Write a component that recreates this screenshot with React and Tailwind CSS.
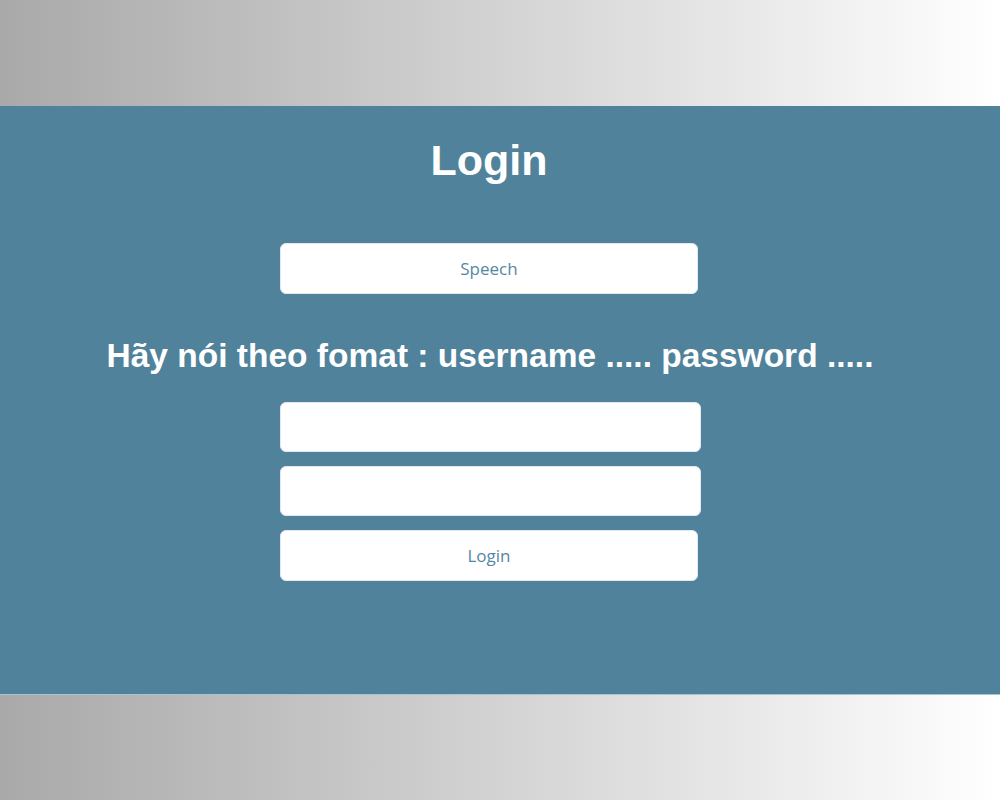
import React, { useState } from 'react';

const App = () => {
    const [username, setUsername] = useState('');
    const [password, setPassword] = useState('');

    const buttonStyle =
        "w-[418px] h-[51px] bg-white rounded-[6px] border border-[#dfe9ef] text-[#5587a4] " +
        "text-[17px] font-['Open_Sans',sans-serif] flex items-center justify-center pt-[1px]";

    const inputStyle =
        "w-[421px] h-[50px] bg-white rounded-[6px] border border-[#dfe9ef] px-3 outline-none " +
        "text-[16px] text-gray-800 font-['Open_Sans',sans-serif]";

    return (
        <div className="min-h-[800px] flex flex-col bg-gradient-to-r from-[#a9a9a9] to-[#ffffff] font-['Liberation_Sans',Arial,sans-serif]">
            <div className="h-[106px]" />

            {/* Login panel */}
            <div className="h-[589px] bg-[#50829b] border-b border-[#a9c3d1] pt-[28px] pr-[22px] flex flex-col items-center">
                <h1 className="text-white text-[43px] font-bold leading-[52px]">Login</h1>

                <button className={buttonStyle + " mt-[57px]"}>Speech</button>

                <h2 className="text-white text-[33.5px] font-bold leading-[38.5px] mt-[43px] pl-[2px]">
                    Hãy nói theo fomat : username ..... password .....
                </h2>

                <div className="flex flex-col items-start gap-[14px] mt-[26px] pl-[3px]">
                    <input
                        type="text"
                        value={username}
                        onChange={e => setUsername(e.target.value)}
                        className={inputStyle}
                    />
                    <input
                        type="password"
                        value={password}
                        onChange={e => setPassword(e.target.value)}
                        className={inputStyle}
                    />
                    <button className={buttonStyle + " h-[50px]"}>Login</button>
                </div>
            </div>

            <div className="flex-1" />
        </div>
    );
};

export default App;
